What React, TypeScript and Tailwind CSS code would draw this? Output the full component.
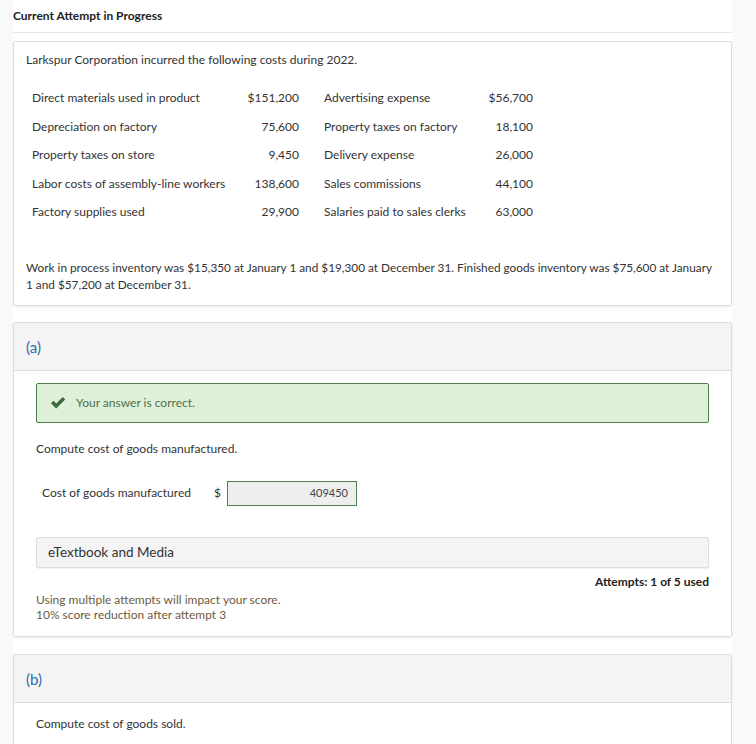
const costs: [string, string, string, string][] = [
  ["Direct materials used in product", "$151,200", "Advertising expense", "$56,700"],
  ["Depreciation on factory", "75,600", "Property taxes on factory", "18,100"],
  ["Property taxes on store", "9,450", "Delivery expense", "26,000"],
  ["Labor costs of assembly-line workers", "138,600", "Sales commissions", "44,100"],
  ["Factory supplies used", "29,900", "Salaries paid to sales clerks", "63,000"],
];

function PartHeader({ label }: { label: string }) {
  return (
    <div className="h-[48px] flex items-center px-[12px] pt-[3px] bg-[#f4f4f4] border-b border-[#dcdcdc]">
      <span className="text-[15px] text-[#2b6ea7]">{label}</span>
    </div>
  );
}

export default function App() {
  return (
    <div className="min-h-[744px] bg-[#f9f9f9] flex pl-[13px] pr-[24px] font-['Lato','Noto_Sans',sans-serif] text-[12px] text-[#333]">
      <div className="flex-1 bg-white">
        <div className="h-[33px] flex items-center border-b border-[#e6e6e6]">
          <h1 className="font-bold text-[12px] text-[#222] -mt-[1px]">Current Attempt in Progress</h1>
        </div>

        <div className="mt-[8px] border border-[#dcdcdc] rounded-[2px] shadow-[0_1px_2px_rgba(0,0,0,0.08)] px-[12px] pt-[9px] pb-[12px]">
          <p className="leading-[17px]">Larkspur Corporation incurred the following costs during 2022.</p>
          <div className="mt-[16px] pl-[6px] grid grid-cols-[200px_67px_175px_59px]">
            {costs.map(([a, b, c, d]) => (
              <div key={a} className="contents">
                <div className="h-[28.5px] flex items-center whitespace-nowrap">{a}</div>
                <div className="h-[28.5px] flex items-center justify-end">{b}</div>
                <div className="h-[28.5px] flex items-center pl-[25px] whitespace-nowrap">{c}</div>
                <div className="h-[28.5px] flex items-center justify-end">{d}</div>
              </div>
            ))}
          </div>
          <p className="mt-[32px] leading-[17px] text-[11.8px] pr-[6px]">
            Work in process inventory was $15,350 at January 1 and $19,300 at December 31. Finished goods inventory was $75,600 at January 1 and $57,200 at December 31.
          </p>
        </div>

        <div className="mt-[16px] border border-[#dcdcdc] rounded-[2px] shadow-[0_1px_2px_rgba(0,0,0,0.08)]">
          <PartHeader label="(a)" />
          <div className="px-[22px] pt-[12px] pb-[14px]">
            <div className="h-[40px] flex items-center bg-[#dff0d8] border border-[#4f7f4a] rounded-[2px] pl-[13px]">
              <svg width="16" height="13" viewBox="0 0 16 13" className="shrink-0">
                <path d="M1 7.2 L3.4 4.8 L6.2 7.6 L12.8 1 L15.2 3.4 L6.2 12.4 Z" fill="#3d6b3a" />
              </svg>
              <span className="ml-[10px] text-[#4d6e4b]">Your answer is correct.</span>
            </div>
            <p className="mt-[17px] leading-[17px]">Compute cost of goods manufactured.</p>
            <div className="mt-[24px] flex items-center pl-[6px]">
              <span className="w-[172px]">Cost of goods manufactured</span>
              <span className="w-[13px]">$</span>
              <div className="w-[130px] h-[25px] bg-[#eeeeee] border border-[#4f7f4a] flex items-center justify-end pr-[8px] text-[11px] text-[#444]">
                409450
              </div>
            </div>
            <div className="mt-[31px] h-[31px] flex items-center bg-[#f4f4f4] border border-[#dedede] rounded-[2px] pl-[11px] text-[13.5px] text-[#333] shadow-[0_1px_1px_rgba(0,0,0,0.06)]">
              eTextbook and Media
            </div>
            <div className="mt-[6px] text-right font-bold text-[#222] leading-[15px]">Attempts: 1 of 5 used</div>
            <p className="mt-[3px] leading-[15px] text-[#6e5b3d]">
              Using multiple attempts will impact your score.
              <br />
              10% score reduction after attempt 3
            </p>
          </div>
        </div>

        <div className="mt-[17px] border border-[#dcdcdc] rounded-[2px] shadow-[0_1px_2px_rgba(0,0,0,0.08)]">
          <PartHeader label="(b)" />
          <div className="px-[22px] pt-[12px] pb-[20px]">
            <p className="leading-[17px]">Compute cost of goods sold.</p>
          </div>
        </div>
      </div>
    </div>
  );
}
